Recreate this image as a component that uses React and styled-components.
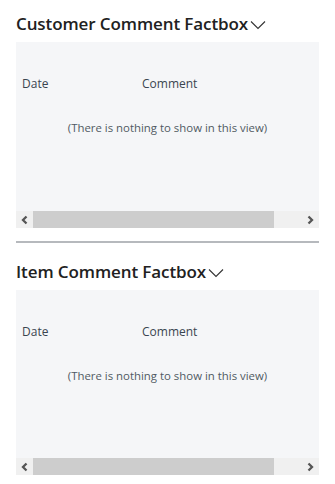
import React from "react";
import styled, { createGlobalStyle } from "styled-components";

const GlobalStyle = createGlobalStyle`
  body {
    margin: 0;
    background: #ffffff;
    font-family: "Open Sans", "Noto Sans", sans-serif;
  }
`;

const Page = styled.div`
  display: flex;
  flex-direction: column;
  padding: 10px 16px 0 16px;
  width: 303px;
`;

const Section = styled.section`
  display: flex;
  flex-direction: column;
`;

const Title = styled.h2`
  display: flex;
  align-items: center;
  gap: 2px;
  margin: 0;
  height: 26px;
  font-size: 17px;
  font-weight: 600;
  color: #212121;
  letter-spacing: -0.1px;
  cursor: pointer;
`;

const Chevron = styled.svg`
  width: 16px;
  height: 10px;
  margin-top: 3px;
`;

const Panel = styled.div`
  display: flex;
  flex-direction: column;
  margin-top: 6px;
  height: ${(p) => p.$height}px;
  background: #f5f6f8;
`;

const HeaderRow = styled.div`
  display: grid;
  grid-template-columns: 120px 1fr;
  padding: 33px 6px 0 6px;
  font-size: 12px;
  color: #3a4550;
  line-height: 17px;
`;

const Empty = styled.div`
  flex: 1;
  text-align: center;
  padding-top: 28px;
  font-size: 11.4px;
  color: #505a63;
`;

const Scrollbar = styled.div`
  display: flex;
  height: 17px;
  background: #f0f0f0;
`;

const Arrow = styled.div`
  width: 17px;
  display: flex;
  align-items: center;
  justify-content: center;
`;

const Track = styled.div`
  flex: 1;
  display: flex;
`;

const Thumb = styled.div`
  width: 241px;
  background: #cdcdcd;
`;

const Divider = styled.hr`
  margin: 13px 0 15px 0;
  border: none;
  height: 2px;
  background: #b6b9bd;
`;

const ArrowIcon = ({ dir }) => (
  <svg width="9" height="10" viewBox="0 0 9 10">
    <path
      d={dir === "left" ? "M6.5 1.5 L3 5 L6.5 8.5" : "M2.5 1.5 L6 5 L2.5 8.5"}
      fill="none"
      stroke="#555"
      strokeWidth="2.3"
    />
  </svg>
);

const Factbox = ({ title, height }) => (
  <Section>
    <Title>
      {title}
      <Chevron viewBox="0 0 16 10">
        <path d="M1 1.5 L8 8.5 L15 1.5" fill="none" stroke="#333" strokeWidth="1.1" />
      </Chevron>
    </Title>
    <Panel $height={height}>
      <HeaderRow>
        <span>Date</span>
        <span>Comment</span>
      </HeaderRow>
      <Empty>(There is nothing to show in this view)</Empty>
      <Scrollbar>
        <Arrow>
          <ArrowIcon dir="left" />
        </Arrow>
        <Track>
          <Thumb />
        </Track>
        <Arrow>
          <ArrowIcon dir="right" />
        </Arrow>
      </Scrollbar>
    </Panel>
  </Section>
);

export default function App() {
  return (
    <>
      <GlobalStyle />
      <Page>
        <Factbox title="Customer Comment Factbox" height={186} />
        <Divider />
        <Factbox title="Item Comment Factbox" height={185} />
      </Page>
    </>
  );
}
